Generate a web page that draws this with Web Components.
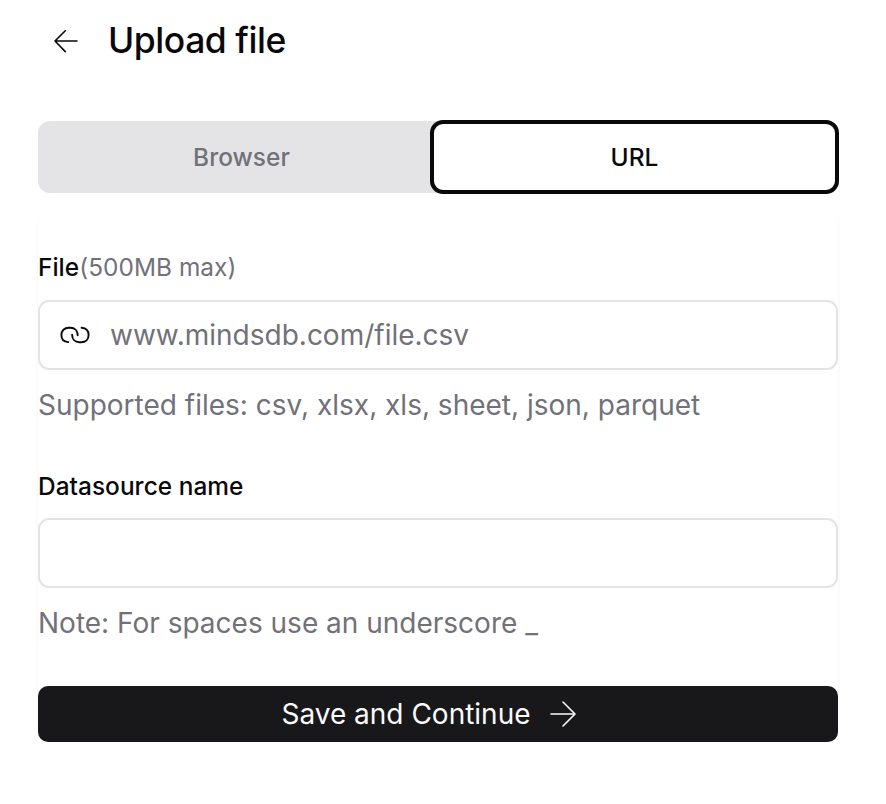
<!DOCTYPE html>
<html lang="en">
<head>
<meta charset="utf-8">
<title>Upload file</title>
<style>
body { margin: 0; background: #fff; color: #09090b; font-family: Inter, "Liberation Sans", sans-serif; }
</style>
</head>
<body>
<upload-page>
  <page-header>Upload file</page-header>
  <tab-bar>
    <tab-item>Browser</tab-item>
    <tab-item active>URL</tab-item>
  </tab-bar>
  <form-card>
    <form-field placeholder="www.mindsdb.com/file.csv" icon>File<span slot="hint">(500MB max)</span><span slot="note">Supported files: csv, xlsx, xls, sheet, json, parquet</span></form-field>
    <form-field>Datasource name<span slot="note">Note: For spaces use an underscore _</span></form-field>
    <submit-button>Save and Continue</submit-button>
  </form-card>
</upload-page>
<script>
const define = (name, html) => {
  const template = document.createElement('template');
  template.innerHTML = html;
  customElements.define(name, class extends HTMLElement {
    constructor() {
      super();
      this.attachShadow({ mode: 'open' }).append(template.content.cloneNode(true));
    }
    connectedCallback() {
      const input = this.shadowRoot.querySelector('input');
      if (input) {
        input.placeholder = this.getAttribute('placeholder') || '';
      }
    }
  });
};

define('upload-page', `
<style>
:host { display: flex; flex-direction: column; box-sizing: border-box; width: 876px; padding: 17px 38px 0; }
</style><slot></slot>`);

define('page-header', `
<style>
:host { display: flex; align-items: center; gap: 30px; height: 48px; padding-left: 16px; }
svg { display: block; }
h1 { margin: 0; font-size: 35.5px; line-height: 48px; font-weight: 500; letter-spacing: -0.45px; white-space: nowrap; }
</style>
<svg width="24" height="24" viewBox="0 0 24 24" fill="none" stroke="currentColor" stroke-width="1.6" stroke-linecap="round" stroke-linejoin="round"><path d="M23 12H1M11.3 1.8L1 12L11.3 22.6"/></svg>
<h1><slot></slot></h1>`);

define('tab-bar', `
<style>
:host { display: grid; grid-template-columns: 393px 407px; margin-top: 56px; height: 72px; border-radius: 12px; background: #e4e4e6; }
</style><slot></slot>`);

define('tab-item', `
<style>
:host { display: flex; align-items: center; justify-content: center; font-size: 24.4px; font-weight: 500; letter-spacing: 0.05px; color: #71717a; padding-left: 14px; }
:host([active]) { margin: -1px; padding: 0; border: 4px solid #09090b; border-radius: 13px; background: #fff; color: #09090b; }
</style><slot></slot>`);

define('form-card', `
<style>
:host { display: flex; flex-direction: column; margin-top: 14px; padding-top: 43px; border-radius: 20px; box-shadow: 0 2px 4px rgba(0,0,0,.05); }
</style><slot></slot>`);

define('form-field', `
<style>
:host { display: flex; flex-direction: column; height: 219px; }
:host(:nth-of-type(2)) { height: 217px; --box-gap: 15px; }
label { font-size: 24.4px; line-height: 34px; font-weight: 500; letter-spacing: 0.05px; white-space: nowrap; }
.hint { font-weight: 400; color: #71717a; }
.box { display: flex; align-items: center; box-sizing: border-box; height: 70px; margin-top: var(--box-gap, 16px); padding: 0 20px; border: 2px solid #e4e4e6; border-radius: 11px; background: #fff; }
svg { display: none; margin-right: 20px; flex: none; }
:host([icon]) svg { display: block; }
input { flex: 1; min-width: 0; padding: 0; border: 0; outline: 0; background: none; font: 400 28px/40px Inter, "Liberation Sans", sans-serif; color: #09090b; }
input::placeholder { color: #71717a; opacity: 1; }
.note { margin-top: 15px; font-size: 28px; line-height: 40px; color: #71717a; white-space: nowrap; }
</style>
<label><slot></slot><span class="hint"><slot name="hint"></slot></span></label>
<div class="box">
<svg width="30" height="18" viewBox="0 0 30 18" fill="none" stroke="#09090b" stroke-width="1.9" stroke-linecap="round"><path d="M8.2 16.1C4 15.8 1.4 13 1.4 9C1.4 4.6 4.4 1.8 8.8 1.8H10.4C14.8 1.8 17.7 4.9 17.7 9.2M21.6 1.8C26 2.2 28.6 5 28.6 9C28.6 13.4 25.6 16.2 21.2 16.2H19.4C15 16.2 12.1 13.1 12.1 8.8"/></svg>
<input>
</div>
<div class="note"><slot name="note"></slot></div>`);

define('submit-button', `
<style>
:host { display: flex; align-items: center; justify-content: center; gap: 19px; height: 56px; padding-right: 19px; border-radius: 10px; background: #18181b; color: #fafafa; font-size: 28px; white-space: nowrap; }
svg { display: block; }
</style>
<span><slot></slot></span>
<svg width="26" height="26" viewBox="0 0 26 26" fill="none" stroke="currentColor" stroke-width="1.6" stroke-linecap="round" stroke-linejoin="round"><path d="M1 13H25M13 1L25 13L13 25"/></svg>`);
</script>
</body>
</html>
